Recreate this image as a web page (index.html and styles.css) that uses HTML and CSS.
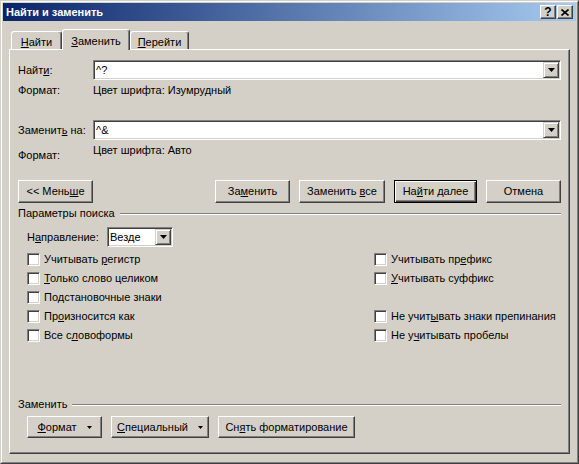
FILE: index.html
```html
<!DOCTYPE html>
<html lang="ru">
<head>
<meta charset="utf-8">
<title>Найти и заменить</title>
<link rel="stylesheet" href="styles.css">
</head>
<body>
<div class="window">
  <div class="frame">
    <div class="titlebar">
      <span class="title">Найти и заменить</span>
      <span class="tb-btn help">?</span>
      <span class="tb-btn close"><svg width="8" height="7" viewBox="0 0 8 7"><path d="M0.5 0.5 L7.5 6.5 M7.5 0.5 L0.5 6.5" stroke="#000" stroke-width="1.6" fill="none"/></svg></span>
    </div>
    <div class="client">
      <div class="tabs">
        <div class="tab t1"><u>Н</u>айти</div>
        <div class="tab sel t2"><u>З</u>аменить</div>
        <div class="tab t3"><u>П</u>ерейти</div>
      </div>
      <div class="page">
        <div class="row">
          <span class="lbl">Найт<u>и</u>:</span>
          <div class="combo"><span class="val">^?</span><span class="ddbtn"><svg width="7" height="4" viewBox="0 0 7 4"><path d="M0 0h7l-3.5 4z" fill="#000"/></svg></span></div>
        </div>
        <div class="fmt">
          <span class="lbl">Формат:</span>
          <span class="fval">Цвет шрифта: Изумрудный</span>
        </div>
        <div class="row r2">
          <span class="lbl">Заменит<u>ь</u> на:</span>
          <div class="combo"><span class="val">^&amp;</span><span class="ddbtn"><svg width="7" height="4" viewBox="0 0 7 4"><path d="M0 0h7l-3.5 4z" fill="#000"/></svg></span></div>
        </div>
        <div class="fmt f2">
          <span class="lbl low">Формат:</span>
          <span class="fval">Цвет шрифта: Авто</span>
        </div>
        <div class="btnrow">
          <span class="btn w75"><span>&lt;&lt; Мень<u>ш</u>е</span></span>
          <span class="btn w75 push"><span>За<u>м</u>енить</span></span>
          <span class="btn w86"><span>Заменить <u>в</u>се</span></span>
          <span class="btn def w83"><span>На<u>й</u>ти далее</span></span>
          <span class="btn w75"><span>Отмена</span></span>
        </div>
        <div class="grp">
          <span>Параметры поиска</span><span class="line"></span>
        </div>
        <div class="dir">
          <span class="dlbl">Н<u>а</u>правление:</span>
          <div class="combo sel66"><span class="val">Везде</span><span class="ddbtn"><svg width="7" height="4" viewBox="0 0 7 4"><path d="M0 0h7l-3.5 4z" fill="#000"/></svg></span></div>
        </div>
        <div class="checks">
          <label class="chk"><span class="box"></span><span>Учитывать <u>р</u>егистр</span></label>
          <label class="chk"><span class="box"></span><span>Учитывать пр<u>е</u>фикс</span></label>
          <label class="chk"><span class="box"></span><span><u>Т</u>олько слово целиком</span></label>
          <label class="chk"><span class="box"></span><span><u>У</u>читывать суффикс</span></label>
          <label class="chk"><span class="box"></span><span>По<u>д</u>становочные знаки</span></label>
          <span></span>
          <label class="chk"><span class="box"></span><span>Пр<u>о</u>износится как</span></label>
          <label class="chk"><span class="box"></span><span>Не учит<u>ы</u>вать знаки препинания</span></label>
          <label class="chk"><span class="box"></span><span>Все с<u>л</u>овоформы</span></label>
          <label class="chk"><span class="box"></span><span>Не у<u>ч</u>итывать пробелы</span></label>
        </div>
        <div class="bottom">
          <div class="grp">
            <span>Заменить</span><span class="line"></span>
          </div>
          <div class="btnrow2">
            <span class="btn b2 w75"><span><u>Ф</u>ормат</span><svg class="mtri" width="5" height="3" viewBox="0 0 5 3"><path d="M0 0h5l-2.5 3z" fill="#000"/></svg></span>
            <span class="btn b2 w98"><span><u>С</u>пециальный</span><svg class="mtri" width="5" height="3" viewBox="0 0 5 3"><path d="M0 0h5l-2.5 3z" fill="#000"/></svg></span>
            <span class="btn b2 w137"><span>Сн<u>я</u>ть форматирование</span></span>
          </div>
        </div>
      </div>
    </div>
  </div>
</div>
</body>
</html>
```

FILE: styles.css
```css
* { box-sizing: border-box; }
html, body { margin: 0; padding: 0; }
body {
  width: 579px;
  height: 464px;
  overflow: hidden;
  background: #D4D0C8;
  font-family: "Liberation Sans", Arial, sans-serif;
  font-size: 11px;
  line-height: 13px;
  color: #000;
}
u { text-decoration: underline; text-underline-offset: 1px; }

.window {
  width: 579px;
  height: 464px;
  border: 1px solid;
  border-color: #D4D0C8 #404040 #404040 #D4D0C8;
  display: flex;
}
.frame {
  flex: 1;
  border: 1px solid;
  border-color: #fff #808080 #808080 #fff;
  padding: 1px;
  display: flex;
  flex-direction: column;
}
.titlebar {
  height: 18px;
  flex: none;
  background: linear-gradient(to right, #0A246A, #A6CAF0);
  display: flex;
  align-items: center;
  padding: 0 3px 0 3px;
  gap: 1px;
}
.title {
  flex: 1;
  color: #fff;
  font-weight: bold;
  font-size: 11px;
}
.tb-btn {
  width: 16px;
  height: 14px;
  border: 1px solid;
  border-color: #fff #404040 #404040 #fff;
  box-shadow: inset -1px -1px #808080;
  background: #D4D0C8;
  display: flex;
  align-items: center;
  justify-content: center;
}
.help { font-weight: bold; font-size: 12px; line-height: 12px; }

.client {
  flex: 1;
  display: flex;
  flex-direction: column;
  padding: 0 6px 7px 6px;
}
.tabs {
  height: 28px;
  flex: none;
  display: flex;
  align-items: flex-end;
  padding-left: 2px;
}
.tab {
  height: 18px;
  border: 1px solid;
  border-bottom: none;
  border-color: #fff #404040 transparent #fff;
  box-shadow: inset -1px 0 #808080;
  border-radius: 3px 3px 0 0;
  text-align: center;
  padding-top: 4px;
  background: #D4D0C8;
}
.tab.sel {
  height: 21px;
  margin-bottom: -1px;
  position: relative;
  z-index: 1;
  padding-top: 5px;
}
.t1 { width: 51px; }
.t2 { width: 68px; }
.t3 { width: 59px; }

.page {
  flex: 1;
  border: 1px solid;
  border-color: #fff #404040 #404040 #fff;
  box-shadow: inset -1px -1px #808080;
  padding: 10px 8px 15px 8px;
  display: flex;
  flex-direction: column;
}
.row { display: flex; align-items: center; height: 20px; }
.r2 { margin-top: 23px; }
.lbl { width: 75px; flex: none; }
.combo {
  flex: 1;
  height: 20px;
  background: #fff;
  border: 1px solid;
  border-color: #808080 #fff #fff #808080;
  box-shadow: inset 1px 1px #404040, inset -1px -1px #D4D0C8;
  padding: 1px;
  display: flex;
  align-items: center;
}
.val { flex: 1; padding-left: 1px; }
.ddbtn {
  width: 16px;
  height: 16px;
  flex: none;
  background: #D4D0C8;
  border: 1px solid;
  border-color: #D4D0C8 #404040 #404040 #D4D0C8;
  box-shadow: inset 1px 1px #fff, inset -1px -1px #808080;
  display: flex;
  align-items: center;
  justify-content: center;
}
.fmt { display: flex; align-items: flex-start; margin-top: 4px; }
.f2 { height: 18px; }
.low { margin-top: 5px; }

.btnrow { display: flex; gap: 9px; margin-top: 18px; }
.btn {
  height: 23px;
  border: 1px solid;
  border-color: #fff #404040 #404040 #fff;
  box-shadow: inset -1px -1px #808080;
  background: #D4D0C8;
  display: flex;
  align-items: center;
  justify-content: center;
  white-space: nowrap;
}
.btn.def {
  border-color: #000;
  box-shadow: inset 1px 1px #fff, inset -1px -1px #404040, inset -2px -2px #808080;
}
.push { margin-left: auto; }
.w75 { width: 75px; }
.w83 { width: 83px; }
.w86 { width: 86px; }
.w98 { width: 98px; }
.w137 { width: 137px; }

.grp { display: flex; align-items: center; margin-top: 4px; }
.line {
  flex: 1;
  height: 2px;
  border-top: 1px solid #808080;
  border-bottom: 1px solid #fff;
  margin-left: 5px;
}
.dir { display: flex; align-items: center; margin-top: 7px; padding-left: 9px; }
.dlbl { width: 80px; flex: none; }
.sel66 { flex: none; width: 66px; }

.checks {
  display: grid;
  grid-template-columns: 347px 1fr;
  grid-auto-rows: 19px;
  margin-top: 3px;
  padding-left: 9px;
}
.chk { display: flex; align-items: center; gap: 4px; white-space: nowrap; }
.box {
  width: 13px;
  height: 13px;
  flex: none;
  background: #fff;
  border: 1px solid;
  border-color: #808080 #fff #fff #808080;
  box-shadow: inset 1px 1px #404040, inset -1px -1px #D4D0C8;
}

.bottom { margin-top: auto; }
.btnrow2 { display: flex; gap: 9px; margin-top: 5px; padding-left: 9px; }
.b2 { height: 22px; }
.mtri { margin-left: 10px; }
```
